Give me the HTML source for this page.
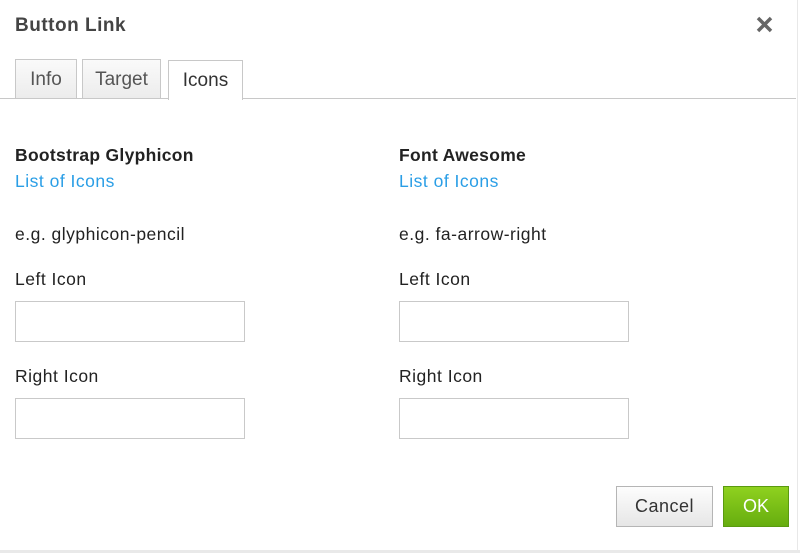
<!DOCTYPE html>
<html><head><style>
body{margin:0;width:800px;height:553px;background:#fff;font-family:"Liberation Sans",sans-serif;color:#222;position:relative;overflow:hidden}
.a{position:absolute;white-space:nowrap}
.tab{position:absolute;top:59px;height:39px;border:1px solid #c8c8c8;border-bottom:none;background:linear-gradient(#fafafa,#ececec);font-size:19px;color:#555;text-align:center;line-height:40px;box-sizing:border-box}
.inp{position:absolute;width:230px;height:41px;border:1px solid #c9c9c9;box-sizing:border-box;background:#fff}
.t{font-size:17.5px;letter-spacing:0.5px}
.lnk{color:#2a9ee6;font-size:17.5px;letter-spacing:0.5px}
.h{font-weight:bold;font-size:17.5px;letter-spacing:0.3px}
</style></head><body>
<div class="a" style="left:15px;top:15px;font-size:19px;font-weight:bold;color:#444;letter-spacing:0.5px">Button Link</div>
<svg class="a" style="left:756px;top:16px" width="17" height="17" viewBox="0 0 17 17"><path d="M2 2L15 15M15 2L2 15" stroke="#666" stroke-width="3.5"/></svg>
<div class="a" style="left:0;top:98px;width:796px;height:1px;background:#c8c8c8"></div>
<div class="tab" style="left:15px;width:62px">Info</div>
<div class="tab" style="left:82px;width:79px">Target</div>
<div class="tab" style="left:168px;width:75px;top:60px;height:40px;background:#fff;color:#333">Icons</div>
<div class="a" style="left:797px;top:0;width:1px;height:553px;background:#e8e8e8"></div>
<div class="a" style="left:0;top:550px;width:800px;height:3px;background:#e9e9e9"></div>

<div class="a h" style="left:15px;top:145px">Bootstrap Glyphicon</div>
<div class="a lnk" style="left:15px;top:171px">List of Icons</div>
<div class="a t" style="left:15px;top:224px">e.g. glyphicon-pencil</div>
<div class="a t" style="left:15px;top:269px">Left Icon</div>
<div class="inp" style="left:15px;top:301px"></div>
<div class="a t" style="left:15px;top:366px">Right Icon</div>
<div class="inp" style="left:15px;top:398px"></div>

<div class="a h" style="left:399px;top:145px">Font Awesome</div>
<div class="a lnk" style="left:399px;top:171px">List of Icons</div>
<div class="a t" style="left:399px;top:224px">e.g. fa-arrow-right</div>
<div class="a t" style="left:399px;top:269px">Left Icon</div>
<div class="inp" style="left:399px;top:301px"></div>
<div class="a t" style="left:399px;top:366px">Right Icon</div>
<div class="inp" style="left:399px;top:398px"></div>

<div class="a" style="left:616px;top:486px;width:97px;height:41px;box-sizing:border-box;border:1px solid #b5b5b5;background:linear-gradient(#fdfdfd,#e6e6e6);font-size:18px;color:#333;text-align:center;line-height:39px;letter-spacing:0.5px">Cancel</div>
<div class="a" style="left:723px;top:486px;width:66px;height:41px;box-sizing:border-box;border:1px solid #5a9a10;background:linear-gradient(#8fd11f,#66ad0f);font-size:18px;color:#fff;text-align:center;line-height:39px">OK</div>
</body></html>
